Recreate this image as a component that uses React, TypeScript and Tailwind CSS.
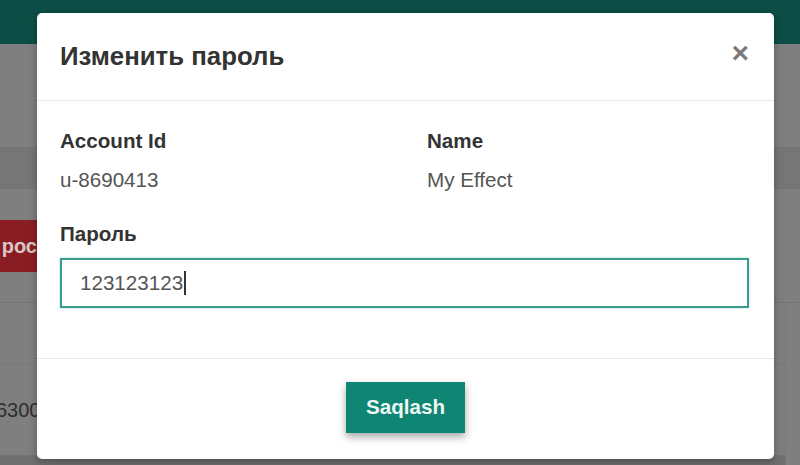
import React from "react";

export default function App() {
  const font = { fontFamily: '"Liberation Sans", Arial, sans-serif' };
  return (
    <div className="relative w-[800px] h-[465px] overflow-hidden bg-[#7f7f7f]" style={font}>
      {/* background page (dimmed) */}
      <div className="flex flex-col w-full h-full">
        <div className="h-[44px] bg-[#0c4e45] shrink-0" />
        <div className="h-[103px] shrink-0" />
        <div className="h-[42px] bg-[#767676] shrink-0" />
        <div className="h-[31px] shrink-0" />
        <div className="h-[52px] shrink-0 flex">
          <div className="w-[37px] bg-[#8a1d23] flex items-center justify-end overflow-hidden">
            <span className="text-[20px] font-bold text-[#d9c7c8] whitespace-nowrap">рос</span>
          </div>
        </div>
        <div className="h-[31px] shrink-0 border-b border-[#747474]" />
        <div className="flex-1 flex">
          <div className="flex-1 flex flex-col">
            <div className="h-[62px] border-b border-[#7a7a7a]" />
            <div className="h-[91px] flex items-center border-b border-[#727272]">
              <span className="text-[20px] text-[#2e2e2e] -ml-[4px]">6300</span>
            </div>
            <div className="flex-1 bg-[#6f6f6f]" />
          </div>
          <div className="w-[15px] border-l border-[#767676]" />
        </div>
      </div>

      {/* modal */}
      <div className="absolute left-[37px] top-[13px] w-[737px] h-[446px] bg-white rounded-[5px] flex flex-col shadow-[0_3px_9px_rgba(0,0,0,0.3)]">
        <div className="h-[88px] shrink-0 border-b border-[#e7e7e7] flex items-center justify-between pl-[23px] pr-[25px]">
          <h4 className="text-[25.8px] font-bold text-[#333] leading-none">Изменить пароль</h4>
          <span className="text-[30px] font-bold text-[#7a7a7a] leading-none -mt-[7px]">×</span>
        </div>
        <div className="pl-[23px] pr-[25px] pt-[28px] pb-[50px] border-b border-[#e7e7e7]">
          <div className="grid grid-cols-[367px_1fr]">
            <div className="flex flex-col gap-[15px]">
              <div className="text-[20.6px] leading-[24px] font-bold text-[#333]">Account Id</div>
              <div className="text-[20.6px] leading-[24px] text-[#555]">u-8690413</div>
            </div>
            <div className="flex flex-col gap-[15px]">
              <div className="text-[20.6px] leading-[24px] font-bold text-[#333]">Name</div>
              <div className="text-[20.6px] leading-[24px] text-[#555]">My Effect</div>
            </div>
          </div>
          <div className="mt-[30px] text-[20.6px] leading-[24px] font-bold text-[#333]">Пароль</div>
          <div className="mt-[12px] h-[50px] border-2 border-[#3a9a8c] shadow-[0_0_2px_rgba(80,200,185,0.6)] flex items-center pl-[18px]">
            <span className="text-[20.6px] text-[#555]">123123123</span>
            <span className="w-[1.5px] h-[24px] bg-[#333] ml-[1px]" />
          </div>
        </div>
        <div className="flex-1 flex justify-center pt-[23px]">
          <button className="w-[119px] h-[51px] bg-[#0f8574] text-[#eef8f6] text-[20.6px] font-bold shadow-[0_4px_8px_rgba(0,0,0,0.35)]">
            Saqlash
          </button>
        </div>
      </div>
    </div>
  );
}
